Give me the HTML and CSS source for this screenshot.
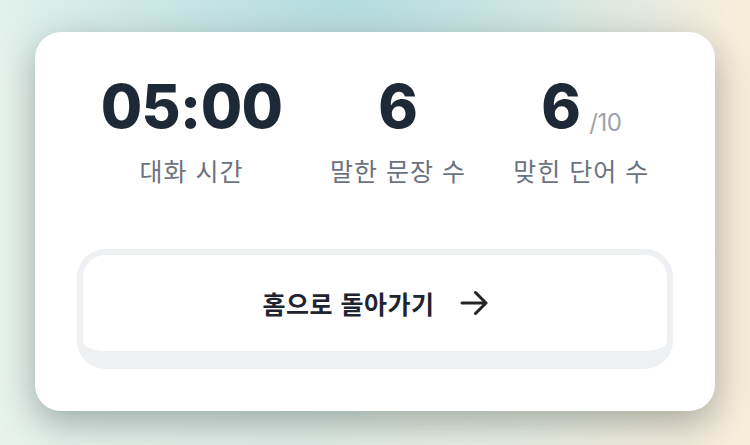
FILE: index.html
```html
<!DOCTYPE html>
<html lang="ko">
<head>
<meta charset="utf-8">
<link rel="stylesheet" href="styles.css">
</head>
<body>
<div class="page">
  <div class="card">
    <div class="stats">
      <div class="stat">
        <div class="num">05:00</div>
        <div class="label">대화 시간</div>
      </div>
      <div class="stat">
        <div class="num">6</div>
        <div class="label">말한 문장 수</div>
      </div>
      <div class="stat">
        <div class="num-row"><span class="num">6</span><span class="total">/10</span></div>
        <div class="label">맞힌 단어 수</div>
      </div>
    </div>
    <button class="home-btn">
      <span class="btn-text">홈으로 돌아가기</span>
      <svg class="arrow" width="28" height="26" viewBox="0 0 28 26" fill="none" stroke="#222427" stroke-width="3" stroke-linecap="round" stroke-linejoin="round"><path d="M2 13h24M15.5 2.5L26 13 15.5 23.5"/></svg>
    </button>
  </div>
</div>
</body>
</html>
```

FILE: styles.css
```css
html, body {
  margin: 0;
  padding: 0;
}
body {
  width: 750px;
  height: 445px;
  overflow: hidden;
  background:
    radial-gradient(ellipse 380px 170px at 46% 0%, #b4dce0 0%, rgba(180,220,224,0) 100%),
    linear-gradient(90deg, #e6f3ed 0%, #e0efe9 40%, #ebf0e4 70%, #f8eddb 100%);
  font-family: Inter, "Noto Sans CJK KR", sans-serif;
}
.page {
  padding: 32px 35px 34px;
}
.card {
  box-sizing: border-box;
  width: 680px;
  height: 379px;
  background: #ffffff;
  border-radius: 26px;
  padding: 44px 42px 42px;
  box-shadow: 0 12px 36px rgba(50, 62, 60, 0.40);
  display: flex;
  flex-direction: column;
}
.stats {
  display: flex;
  justify-content: space-around;
}
.stat {
  display: flex;
  flex-direction: column;
  align-items: center;
}
.num {
  font-family: Inter, sans-serif;
  font-weight: 800;
  font-size: 60px;
  line-height: 60px;
  color: #1e2937;
  letter-spacing: -0.01em;
}
.num-row {
  display: flex;
  align-items: flex-end;
}
.total {
  font-family: Inter, sans-serif;
  font-size: 24px;
  line-height: 26px;
  color: #9ca3af;
  margin-left: 9px;
  letter-spacing: -0.02em;
}
.label {
  margin-top: 18px;
  font-family: "Noto Sans CJK KR", sans-serif;
  font-size: 25px;
  line-height: 32px;
  letter-spacing: 1px;
  color: #6b7280;
}
.home-btn {
  margin-top: 63px;
  box-sizing: border-box;
  width: 596px;
  height: 120px;
  background: #ffffff;
  border-style: solid;
  border-color: #eff0f4;
  border-width: 6px 6px 18px 6px;
  border-radius: 28px;
  display: flex;
  align-items: center;
  justify-content: center;
  gap: 25px;
  padding: 0;
  font-family: "Noto Sans CJK KR", sans-serif;
  font-weight: 700;
  font-size: 25px;
  letter-spacing: 0.5px;
  color: #1f2530;
}
.btn-text {
  line-height: 32px;
}
.arrow {
  display: block;
}
```
